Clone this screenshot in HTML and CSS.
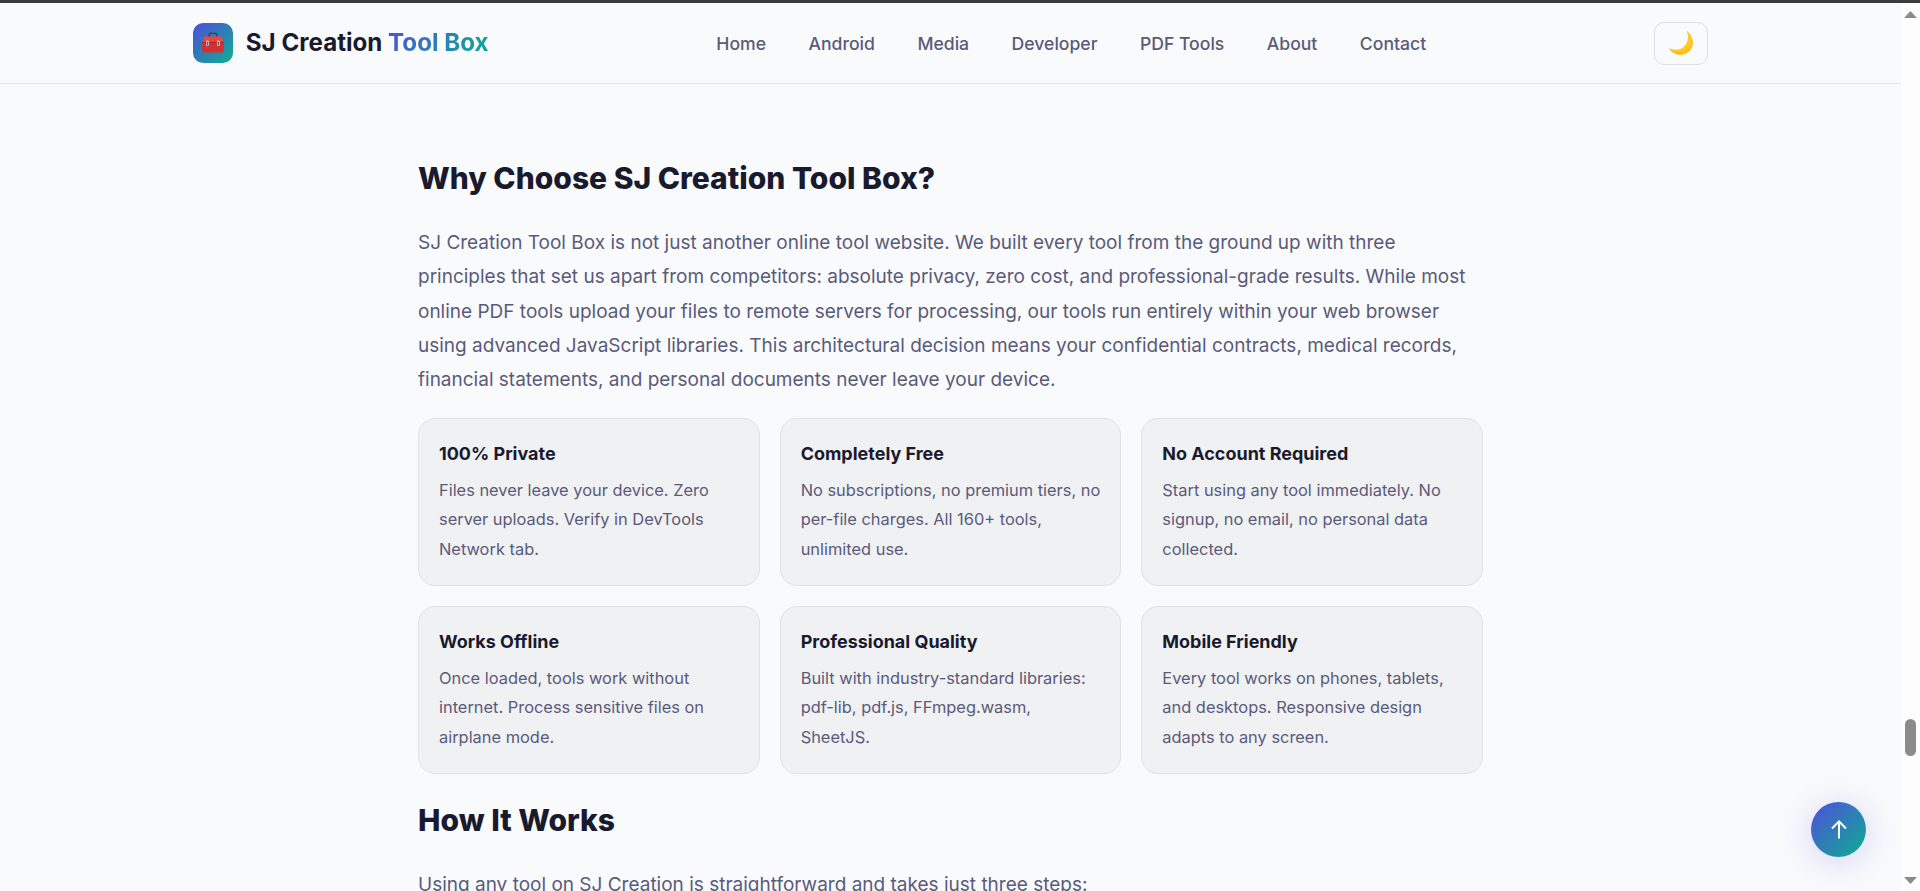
FILE: index.html
```html
<!DOCTYPE html>
<html lang="en">
<head>
  <meta charset="UTF-8">
  <meta name="viewport" content="width=device-width, initial-scale=1.0">
  <title>SJ Creation Tool Box</title>
  <link rel="stylesheet" href="styles.css">
</head>
<body>
  <div class="window">
    <div class="page">
      <header class="header">
        <div class="header-inner">
          <a class="logo" href="#">
            <span class="logo-icon">
              <svg width="24" height="24" viewBox="0 0 24 24">
                <path d="M8.2 6V4.400Q8.200 2.300 10.200 2.300H13.800Q15.800 2.300 15.800 4.400V6" fill="none" stroke="#37474f" stroke-width="1.500"/>
                <path d="M3.500 5.500H20.500L22.500 11.500H1.500Z" fill="#f44336"/>
                <path d="M1.200 11H22.800V20.500Q22.800 21.500 21.800 21.500H2.200Q1.200 21.500 1.200 20.500Z" fill="#d3302f"/>
                <path d="M1.200 11.300H22.800" stroke="#a82428" stroke-width="1"/>
                <rect x="5" y="9.500" width="3" height="5.500" rx="1" fill="#b0bec5"/>
                <rect x="16" y="9.500" width="3" height="5.500" rx="1" fill="#b0bec5"/>
                <path d="M6.500 11V14M17.500 11V14" stroke="#455a64" stroke-width="1"/>
              </svg>
            </span>
            <span class="logo-text">SJ Creation <span class="gradient-text">Tool Box</span></span>
          </a>
          <nav class="nav">
            <a href="#">Home</a>
            <a href="#">Android</a>
            <a href="#">Media</a>
            <a href="#">Developer</a>
            <a href="#">PDF Tools</a>
            <a href="#">About</a>
            <a href="#">Contact</a>
          </nav>
          <button class="theme-toggle" aria-label="Toggle theme">
            <svg width="26" height="26" viewBox="0 0 26 26">
              <path d="M18.800 1C24.500 5 26.600 12.500 23.300 18.500C19 26.500 6.500 27.300 1 18.300C7 21 13.500 20 17 15.500C20.300 11.500 20.600 5.500 18.800 1Z" fill="#ffca28"/>
              <path d="M1 18.300C6.500 27.300 19 26.500 23.300 18.500C25 15.400 25.300 11.900 24.300 8.700C23.800 15.500 18.500 21 12 21.400C7.700 21.600 4 20.500 1 18.300Z" fill="#ffb300" opacity="0.45"/>
            </svg>
          </button>
        </div>
      </header>

      <main class="content">
        <h2>Why Choose SJ Creation Tool Box?</h2>
        <p>SJ Creation Tool Box is not just another online tool website. We built every tool from the ground up with three principles that set us apart from competitors: absolute privacy, zero cost, and professional-grade results. While most online PDF tools upload your files to remote servers for processing, our tools run entirely within your web browser using advanced JavaScript libraries. This architectural decision means your confidential contracts, medical records, financial statements, and personal documents never leave your device.</p>
        <div class="features">
          <div class="feature-card">
            <h3>100% Private</h3>
            <p>Files never leave your device. Zero server uploads. Verify in DevTools Network tab.</p>
          </div>
          <div class="feature-card">
            <h3>Completely Free</h3>
            <p>No subscriptions, no premium tiers, no per-file charges. All 160+ tools, unlimited use.</p>
          </div>
          <div class="feature-card">
            <h3>No Account Required</h3>
            <p>Start using any tool immediately. No signup, no email, no personal data collected.</p>
          </div>
          <div class="feature-card">
            <h3>Works Offline</h3>
            <p>Once loaded, tools work without internet. Process sensitive files on airplane mode.</p>
          </div>
          <div class="feature-card">
            <h3>Professional Quality</h3>
            <p>Built with industry-standard libraries: pdf-lib, pdf.js, FFmpeg.wasm, SheetJS.</p>
          </div>
          <div class="feature-card">
            <h3>Mobile Friendly</h3>
            <p>Every tool works on phones, tablets, and desktops. Responsive design adapts to any screen.</p>
          </div>
        </div>
        <h2>How It Works</h2>
        <p>Using any tool on SJ Creation is straightforward and takes just three steps:</p>
      </main>
    </div>

    <div class="scrollbar">
      <svg width="13" height="7" viewBox="0 0 13 7"><path d="M0 7L6.500 0L13 7Z" fill="#8b8b8b"/></svg>
      <div class="track"><div class="thumb"></div></div>
      <svg width="13" height="7" viewBox="0 0 13 7"><path d="M0 0L6.500 7L13 0Z" fill="#8b8b8b"/></svg>
    </div>
  </div>

  <button class="back-to-top" aria-label="Back to top">
    <svg width="16" height="19" viewBox="0 0 16 19">
      <path d="M8 18.500V2M1 8.500L8 1.500L15 8.500" fill="none" stroke="#fff" stroke-width="2"/>
    </svg>
  </button>
</body>
</html>
```
FILE: styles.css
```css
* {
  box-sizing: border-box;
}

body {
  margin: 0;
  font-family: Inter, "Liberation Sans", sans-serif;
  background: #f9fafc;
  color: #1a1a2e;
  overflow: hidden;
}

.window {
  display: flex;
  height: 891px;
  border-top: 3px solid #3c3c3c;
}

.page {
  flex: 1;
  overflow: hidden;
}

.header {
  height: 81px;
  border-bottom: 1px solid #e3e5e8;
}

.header-inner {
  display: flex;
  align-items: center;
  justify-content: space-between;
  width: 1515px;
  height: 80px;
  margin: 0 auto;
}

.logo {
  display: flex;
  align-items: center;
  gap: 12.800px;
  color: #1a1a2e;
  text-decoration: none;
}

.logo-icon {
  display: flex;
  align-items: center;
  justify-content: center;
  width: 40px;
  height: 40px;
  border-radius: 10px;
  background: linear-gradient(135deg, #4f4edc, #0caf90);
}

.logo-text {
  padding-bottom: 2px;
  font-size: 24.150px;
  font-weight: 700;
  white-space: nowrap;
}

.gradient-text {
  background: linear-gradient(135deg, #4f4edc, #0caf90);
  -webkit-background-clip: text;
  background-clip: text;
  color: transparent;
}

.nav {
  display: flex;
  gap: 42.500px;
}

.nav a {
  font-size: 17.600px;
  font-weight: 500;
  color: #5a5a7a;
  text-decoration: none;
}

.theme-toggle {
  display: flex;
  align-items: center;
  justify-content: center;
  width: 54px;
  height: 43px;
  padding: 0;
  border: 1px solid #dcdee1;
  border-radius: 10px;
  background: #f9fafc;
}

.content {
  width: 1065px;
  margin: 0 auto;
  padding-top: 70px;
}

h2 {
  margin: 0 0 24px;
  font-size: 30px;
  font-weight: 800;
  line-height: 48px;
}

.content > p {
  margin: 0;
  font-size: 19px;
  line-height: 34.300px;
  color: #5a5a7a;
}

.features {
  display: grid;
  grid-template-columns: repeat(3, 1fr);
  gap: 20px;
  margin: 20.500px 0 22px;
}

.feature-card {
  height: 168px;
  padding: 20px;
  background: #f0f1f3;
  border: 1px solid #dfe1e4;
  border-radius: 17px;
}

.feature-card h3 {
  margin: 0 0 8px;
  font-size: 17.980px;
  font-weight: 700;
  line-height: 29px;
}

.feature-card p {
  margin: 0 -2px 0 0;
  font-size: 16.400px;
  line-height: 29.400px;
  color: #5a5a7a;
}

.scrollbar {
  display: flex;
  flex-direction: column;
  align-items: center;
  width: 19px;
  padding: 8px 0 7px;
  background: #fdfdfe;
}

.track {
  flex: 1;
  padding-top: 701px;
}

.thumb {
  width: 11px;
  height: 37px;
  border-radius: 6px;
  background: #8b8b8b;
}

.back-to-top {
  position: fixed;
  right: 54px;
  bottom: 34px;
  display: flex;
  align-items: center;
  justify-content: center;
  width: 55px;
  height: 55px;
  padding: 0;
  border: none;
  border-radius: 50%;
  background: linear-gradient(135deg, #4f4edc, #0caf90);
  box-shadow: 0 4px 32px rgba(79, 70, 229, 0.22);
}
```
